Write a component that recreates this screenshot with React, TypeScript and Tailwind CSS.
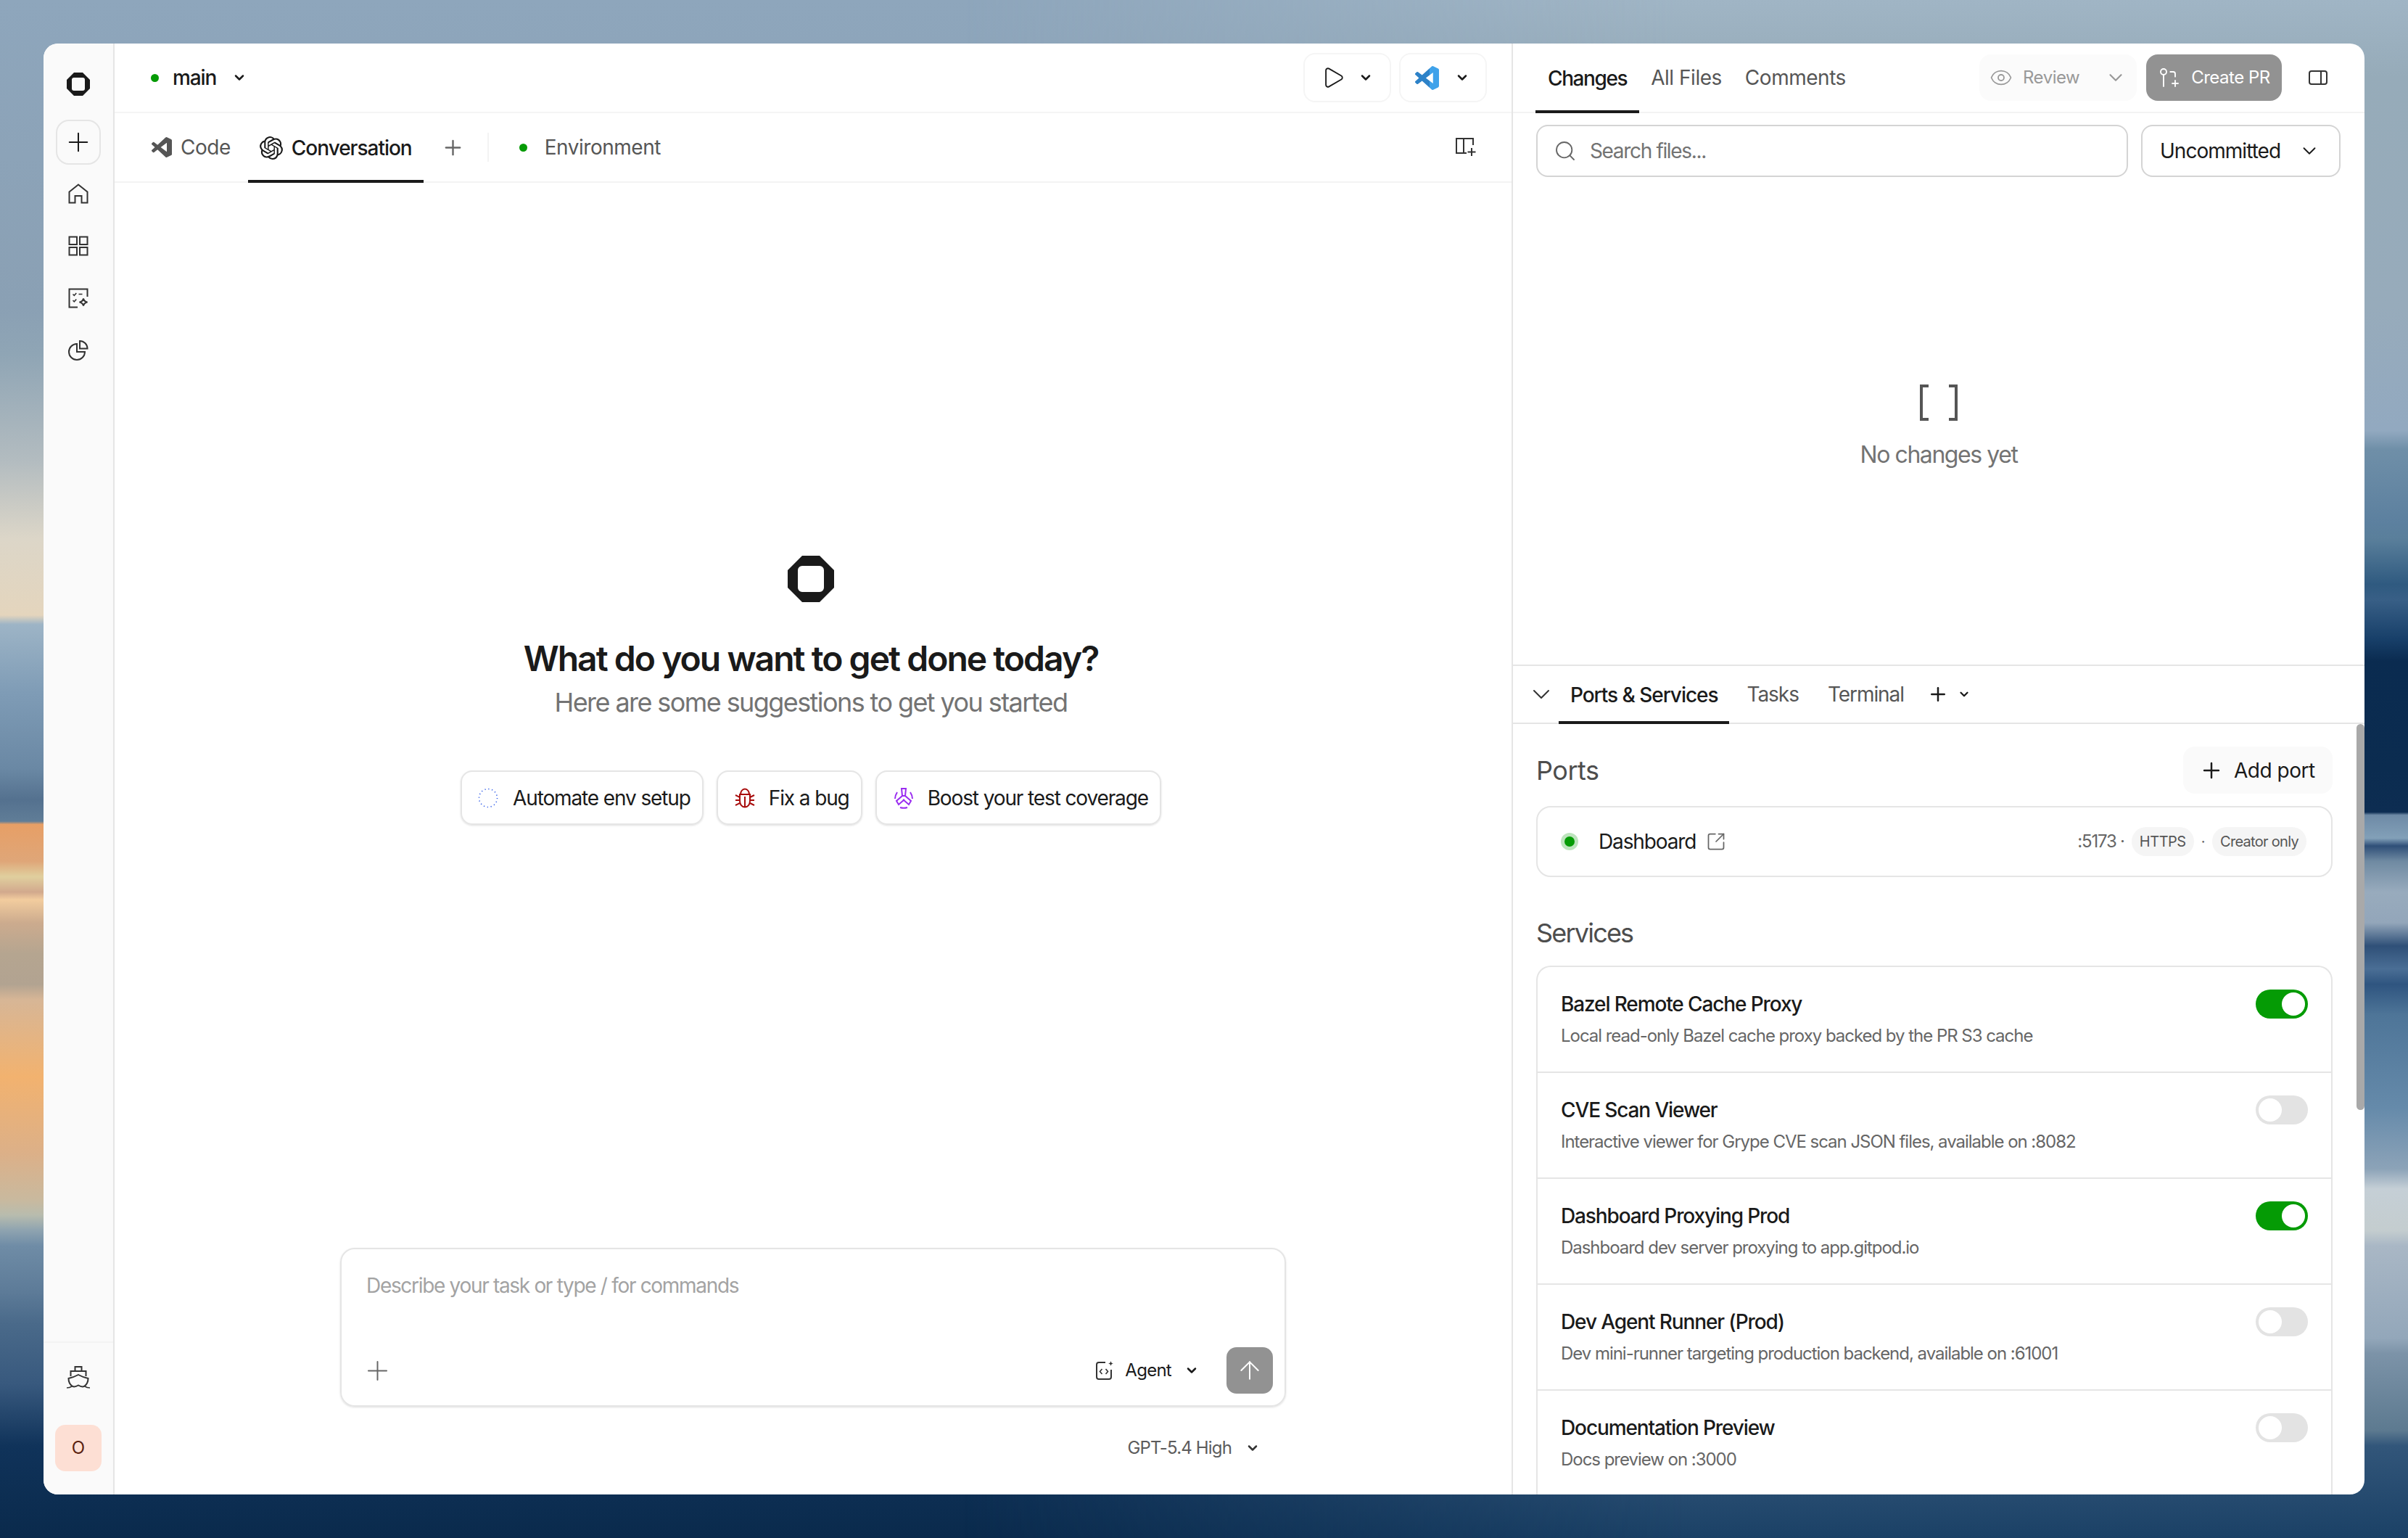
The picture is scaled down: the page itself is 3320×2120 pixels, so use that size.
import * as React from "react";
import {
  ChevronDown,
  Eye,
  GitPullRequestCreate,
  Plus,
  Search,
  SquareArrowOutUpRight,
  ArrowUp,
  Play,
} from "lucide-react";
import { SiOpenai } from "react-icons/si";

const VSCODE_PATH =
  "M23.15 2.587L18.21.21a1.494 1.494 0 0 0-1.705.29l-9.46 8.63-4.12-3.128a.999.999 0 0 0-1.276.057L.327 7.261A1 1 0 0 0 .326 8.74L3.899 12 .326 15.26a1 1 0 0 0 .001 1.479L1.65 17.94a.999.999 0 0 0 1.276.057l4.12-3.128 9.46 8.63a1.492 1.492 0 0 0 1.704.29l4.942-2.377A1.5 1.5 0 0 0 24 20.06V3.939a1.5 1.5 0 0 0-.85-1.352zm-5.146 14.861L10.826 12l7.178-5.448v10.896z";

function Logo(props: { className: string }) {
  return (
    <svg className={props.className} viewBox="0 0 32 32" fill="#1a1a1a">
      <path
        fillRule="evenodd"
        d="M10 0h12l10 10v12L22 32H10L0 22V10zM10 7h12a3 3 0 0 1 3 3v12a3 3 0 0 1-3 3H10a3 3 0 0 1-3-3V10a3 3 0 0 1 3-3z"
      />
    </svg>
  );
}

function SmallChevron(props: { className?: string }) {
  return <ChevronDown className={props.className ?? "size-[20px] text-[#1a1a1a]"} strokeWidth={3} />;
}

function HomeIcon() {
  return (
    <svg className="size-[28px]" viewBox="0 0 28 28" fill="none" stroke="#333" strokeWidth="2">
      <path d="M1.5 11.5L14 1.5l12.5 10v15h-8V17h-9v9.5h-8z" />
    </svg>
  );
}

function GridIcon() {
  return (
    <svg className="size-[28px]" viewBox="0 0 28 28" fill="none" stroke="#333" strokeWidth="2">
      <rect x="1.5" y="1.5" width="10.5" height="10.5" />
      <rect x="16" y="1.5" width="10.5" height="10.5" />
      <rect x="1.5" y="16" width="10.5" height="10.5" />
      <rect x="16" y="16" width="10.5" height="10.5" />
    </svg>
  );
}

function TasksIcon() {
  return (
    <svg className="size-[28px]" viewBox="0 0 28 28" fill="none" stroke="#333" strokeWidth="2">
      <path d="M13 26.5H1.5v-25h25V12" />
      <path d="M6.5 8.5l1.8 1.8 3-3.3M14.5 8.5h5M6.5 17l1.8 1.8 3-3.3" strokeWidth="1.6" />
      <path d="M21 14.5c.6 3 2 4.4 5.5 5-3.500.6-4.900 2-5.500 5-.6-3-2-4.400-5.500-5 3.500-.6 4.900-2 5.500-5z" />
    </svg>
  );
}

function PieIcon() {
  return (
    <svg className="size-[28px]" viewBox="0 0 28 28" fill="none" stroke="#333" strokeWidth="2">
      <path d="M12 5A11 11 0 1 0 23 16H12z" />
      <path d="M16 1a10.500 10.500 0 0 1 10.500 10.500H16z" />
    </svg>
  );
}

function ShipIcon() {
  return (
    <svg className="size-[32px]" viewBox="0 0 32 32" fill="none" stroke="#333" strokeWidth="2">
      <rect x="11.500" y="1" width="9" height="6" />
      <path d="M5.500 14V7h21v7" />
      <path d="M2.500 17c6-1.500 9-2.500 13.500-5 4.500 2.500 7.500 3.500 13.500 5 0 5-2.500 9-5.500 11-2.500 1-5.500 0-8-1.500-2.500 1.500-5.500 2.500-8 1.500-3-2-5.500-6-5.500-11z" />
      <path d="M0 30c3 0 5-.5 7-2M32 30c-3 0-5-.5-7-2" strokeWidth="1.600" />
    </svg>
  );
}

function SplitPlusIcon() {
  return (
    <svg className="size-[30px]" viewBox="0 0 30 30" fill="none" stroke="#333" strokeWidth="2">
      <path d="M25 12V3H2v20h14M12 3v20" />
      <path d="M23 16v11M17.500 21.500h11" />
    </svg>
  );
}

function PanelIcon() {
  return (
    <svg className="size-[28px]" viewBox="0 0 28 28" fill="none" stroke="#333" strokeWidth="2">
      <rect x="2" y="5" width="24" height="18" rx="3" />
      <path d="M18 5v18" />
    </svg>
  );
}

function BoostIcon() {
  return (
    <svg className="size-[30px]" viewBox="0 0 30 30" fill="none" stroke="#9a2cf0" strokeWidth="2">
      <path d="M12 2h6l-1 10h-4zM13 12l-8 7 3 5 8-7M17 12l8 7-3 5-8-7" />
      <path d="M6 7c-2 3-3 6-3 9M24 7c2 3 3 6 3 9M10 28c3 1 7 1 10 0" />
    </svg>
  );
}

function AgentIcon() {
  return (
    <svg className="size-[28px]" viewBox="0 0 28 28" fill="none" stroke="#333" strokeWidth="2">
      <path d="M15 3H6a3 3 0 0 0-3 3v17a3 3 0 0 0 3 3h14a3 3 0 0 0 3-3V13" />
      <path d="M10.500 12l-3 3.500 3 3.500M15.500 12l3 3.500-3 3.500" strokeWidth="1.600" />
      <path d="M22.500 1c.4 2.400 1.200 3.200 3.500 3.500-2.300.4-3.100 1.200-3.500 3.500-.4-2.300-1.200-3.100-3.500-3.500 2.300-.3 3.100-1.100 3.500-3.500z" fill="#333" stroke="none" />
    </svg>
  );
}

function Toggle(props: { on?: boolean }) {
  return (
    <div
      className={
        props.on
          ? "flex h-[40px] w-[72px] shrink-0 items-center justify-end rounded-full bg-[#059b05] p-[4px]"
          : "flex h-[40px] w-[72px] shrink-0 items-center justify-start rounded-full bg-[#e3e3e3] p-[4px]"
      }
    >
      <div className="size-[32px] rounded-full bg-white" />
    </div>
  );
}

const services = [
  { name: "Bazel Remote Cache Proxy", desc: "Local read-only Bazel cache proxy backed by the PR S3 cache", on: true },
  { name: "CVE Scan Viewer", desc: "Interactive viewer for Grype CVE scan JSON files, available on :8082", on: false },
  { name: "Dashboard Proxying Prod", desc: "Dashboard dev server proxying to app.gitpod.io", on: true },
  { name: "Dev Agent Runner (Prod)", desc: "Dev mini-runner targeting production backend, available on :61001", on: false },
  { name: "Documentation Preview", desc: "Docs preview on :3000", on: false },
];

function Sidebar() {
  return (
    <aside className="flex w-[98px] shrink-0 flex-col items-center border-r-2 border-[#e5e5e5] bg-[#fafafa]">
      <Logo className="mt-[40px] size-[32px]" />
      <button className="mt-[33px] flex size-[62px] items-center justify-center rounded-[18px] border-2 border-[#e5e5e5]">
        <Plus className="size-[42px] text-[#1a1a1a]" strokeWidth={1.15} />
      </button>
      <div className="mt-[26px] flex flex-col items-center gap-[44px]">
        <HomeIcon />
        <GridIcon />
        <TasksIcon />
        <PieIcon />
      </div>
      <div className="mt-auto flex w-full flex-col items-center border-t-2 border-[#f3f3f3] pt-[32px] pb-[32px]">
        <ShipIcon />
        <div className="mt-[49px] flex size-[64px] items-center justify-center rounded-[14px] bg-[#fddfd4] text-[24px] tracking-normal text-[#5a1f10]">
          O
        </div>
      </div>
    </aside>
  );
}

function LeftPanel() {
  return (
    <section className="flex min-w-0 flex-1 flex-col border-r-2 border-[#e5e5e5]">
      <div className="flex h-[96px] shrink-0 items-center justify-between border-b-2 border-[#f5f5f5] pr-[34px] pl-[50px]">
        <div className="flex items-center">
          <span className="size-[11px] rounded-full bg-[#059b05]" />
          <span className="ml-[19px] text-[28px] font-medium tracking-[-0.04em] text-[#1a1a1a]">main</span>
          <SmallChevron className="ml-[22px] size-[20px] text-[#1a1a1a]" />
        </div>
        <div className="flex items-center gap-[11px]">
          <button className="flex h-[68px] w-[121px] items-center justify-center gap-[18px] rounded-[16px] border-2 border-[#f5f5f5] pr-[2px]">
            <Play className="size-[34px] text-[#1a1a1a]" strokeWidth={1.3} />
            <SmallChevron />
          </button>
          <button className="flex h-[68px] w-[121px] items-center justify-center gap-[22px] rounded-[16px] border-2 border-[#f5f5f5] pr-[2px]">
            <svg className="size-[33px]" viewBox="0 0 24 24">
              <defs>
                <linearGradient id="vscode-tone" x1="0" y1="0" x2="1" y2="0">
                  <stop offset="0.62" stopColor="#2d82c8" />
                  <stop offset="0.62" stopColor="#3fa2ea" />
                </linearGradient>
              </defs>
              <path d={VSCODE_PATH} fill="url(#vscode-tone)" />
            </svg>
            <SmallChevron />
          </button>
        </div>
      </div>

      <div className="flex h-[96px] shrink-0 items-center justify-between border-b-2 border-[#f3f3f3] pr-[48px] pl-[35px]">
        <div className="flex h-full items-center gap-[8px]">
          <div className="flex h-full items-center gap-[12px] px-[16px] text-[28px] text-[#565656]">
            <svg className="size-[28px]" viewBox="0 0 24 24" fill="#555">
              <path d={VSCODE_PATH} />
            </svg>
            Code
          </div>
          <div className="mb-[-2px] flex h-[calc(100%+2px)] items-center gap-[12px] border-b-4 border-[#1a1a1a] px-[16px] pt-[4px] text-[28px] font-medium tracking-[-0.036em] text-[#1a1a1a]">
            <SiOpenai className="size-[32px]" />
            Conversation
          </div>
          <Plus className="ml-[16px] size-[33px] text-[#666]" strokeWidth={1.75} />
          <div className="ml-[23px] h-[40px] w-[2px] bg-[#f3f3f3]" />
          <span className="ml-[34px] size-[11px] rounded-full bg-[#059b05]" />
          <span className="ml-[16px] text-[28px] text-[#565656]">Environment</span>
        </div>
        <SplitPlusIcon />
      </div>

      <div className="flex min-h-0 flex-1 flex-col items-center">
        <div className="flex flex-col items-center pr-[6px]">
          <Logo className="mt-[514px] size-[64px]" />
          <h1 className="mt-[48px] text-[48px] leading-[60px] font-semibold tracking-[-0.041em] text-[#1a1a1a]">
            What do you want to get done today?
          </h1>
          <p className="mt-[6px] text-[36px] leading-[48px] tracking-[-0.044em] text-[#737373]">
            Here are some suggestions to get you started
          </p>
          <div className="mt-[70px] flex gap-[18px] text-[28px] tracking-[-0.04em] text-[#1a1a1a]">
            <button className="flex h-[75px] items-center gap-[20px] rounded-[16px] border-2 border-[#e5e5e5] pr-[16px] pl-[22px] shadow-sm">
              <svg className="size-[28px]" viewBox="0 0 28 28" fill="none" stroke="#2f5be8" strokeWidth="1.600" strokeDasharray="1.200 3.700">
                <circle cx="14" cy="14" r="12.500" />
              </svg>
              Automate env setup
            </button>
            <button className="flex h-[75px] items-center gap-[18px] rounded-[16px] border-2 border-[#e5e5e5] pr-[16px] pl-[22px] shadow-sm">
              <svg className="size-[30px]" viewBox="0 0 30 30" fill="none" stroke="#a80d0d" strokeWidth="2">
                <path d="M9 10c0-4 2.500-7.500 6-7.500s6 3.500 6 7.500zM8 10h14v9c0 5-3 8.500-7 8.500S8 24 8 19zM15 13v14" />
                <path d="M2 11l6 3M28 11l-6 3M2 18h6M28 18h-6M2 25l6-3M28 25l-6-3" />
              </svg>
              Fix a bug
            </button>
            <button className="flex h-[75px] items-center gap-[18px] rounded-[16px] border-2 border-[#e5e5e5] pr-[16px] pl-[22px] shadow-sm">
              <BoostIcon />
              Boost your test coverage
            </button>
          </div>
        </div>

        <div className="mt-auto flex h-[219px] w-[1304px] flex-col justify-between rounded-[20px] border-2 border-[#e5e5e5] pt-[30px] pr-[16px] pb-[16px] pl-[34px] shadow-sm">
          <div className="text-[28px] leading-[40px] tracking-[-0.047em] text-[#a3a3a3]">Describe your task or type / for commands</div>
          <div className="flex items-center">
            <Plus className="mr-auto ml-[-6px] size-[43px] text-[#666]" strokeWidth={1.1} />
            <AgentIcon />
            <span className="ml-[14px] text-[24px] tracking-[-0.03em] text-[#1a1a1a]">Agent</span>
            <SmallChevron className="mr-[38px] ml-[18px] size-[20px] text-[#1a1a1a]" />
            <button className="flex size-[64px] items-center justify-center rounded-[14px] bg-[#929292]">
              <ArrowUp className="size-[40px] text-white" strokeWidth={1.2} />
            </button>
          </div>
        </div>
        <div className="flex h-[121px] w-[1304px] shrink-0 items-center justify-end pr-[36px] pb-[8px] text-[24px] tracking-[-0.035em] text-[#5c5c5c]">
          GPT-5.4 High
          <SmallChevron className="ml-[19px] size-[20px] text-[#333]" />
        </div>
      </div>
    </section>
  );
}

function RightPanel() {
  return (
    <section className="flex w-[1174px] shrink-0 flex-col">
      <div className="flex h-[96px] shrink-0 items-center border-b-2 border-[#f3f3f3] pr-[50px] pl-[31px]">
        <div className="flex h-full items-center text-[28px] text-[#565656]">
          <div className="mb-[-2px] flex h-[calc(100%+2px)] items-center border-b-4 border-[#1a1a1a] px-[17px] pt-[4px] font-medium tracking-[-0.05em] text-[#1a1a1a]">
            Changes
          </div>
          <div className="px-[16px]">All Files</div>
          <div className="px-[16px]">Comments</div>
        </div>
        <button className="ml-auto flex h-[64px] w-[217px] items-center rounded-[16px] bg-[#fbfbfb] pr-[14px] pl-[14px] text-[24px] text-[#999]">
          <Eye className="size-[32px]" strokeWidth={1.33} />
          <span className="ml-[14px]">Review</span>
          <ChevronDown className="ml-auto size-[30px]" strokeWidth={1.75} />
        </button>
        <button className="ml-[13px] flex h-[64px] w-[187px] items-center justify-center gap-[14px] rounded-[16px] bg-[#929292] text-[24px] text-white">
          <GitPullRequestCreate className="size-[32px]" strokeWidth={1.4} />
          Create PR
        </button>
        <div className="ml-[36px]">
          <PanelIcon />
        </div>
      </div>

      <div className="flex h-[762px] shrink-0 flex-col border-b-2 border-[#e5e5e5]">
        <div className="mt-[16px] flex shrink-0 gap-[18px] pr-[33px] pl-[32px]">
          <div className="flex h-[72px] flex-1 items-center rounded-[16px] border-2 border-[#d4d4d4] pl-[22px] text-[28px] tracking-[-0.048em] text-[#737373]">
            <Search className="size-[32px] text-[#666]" strokeWidth={1.4} />
            <span className="ml-[18px]">Search files...</span>
          </div>
          <div className="flex h-[72px] w-[275px] items-center rounded-[16px] border-2 border-[#d4d4d4] pr-[26px] pl-[24px] text-[28px] tracking-[-0.035em] text-[#1a1a1a]">
            Uncommitted
            <ChevronDown className="ml-auto size-[30px]" strokeWidth={1.5} />
          </div>
        </div>
        <div className="flex flex-col items-center pt-[286px]">
          <svg className="h-[50px] w-[52px]" viewBox="0 0 52 50" fill="none" stroke="#555" strokeWidth="4">
            <path d="M12 2H2v46h10M40 2h10v46H40" />
          </svg>
          <div className="mt-[27px] text-[32px] leading-[40px] tracking-[-0.045em] text-[#737373]">No changes yet</div>
        </div>
      </div>

      <div className="relative flex min-h-0 flex-1 flex-col overflow-hidden">
        <div className="flex h-[80px] shrink-0 items-center border-b-2 border-[#e5e5e5] pl-[19px] text-[28px] tracking-[-0.0375em] text-[#565656]">
          <ChevronDown className="size-[40px] text-[#333]" strokeWidth={1.2} />
          <div className="mb-[-2px] ml-[4px] flex h-[calc(100%+2px)] items-center border-b-4 border-[#1a1a1a] px-[16px] pt-[4px] font-medium text-[#1a1a1a]">
            Ports &amp; Services
          </div>
          <div className="ml-[8px] px-[16px]">Tasks</div>
          <div className="ml-[8px] px-[16px]">Terminal</div>
          <Plus className="ml-[16px] size-[30px] text-[#1a1a1a]" strokeWidth={2} />
          <SmallChevron className="ml-[12px] size-[18px] text-[#1a1a1a]" />
        </div>

        <div className="min-h-0 flex-1 pr-[44px] pl-[32px]">
          <div className="mt-[31px] flex items-center justify-between">
            <h2 className="text-[36px] leading-[48px] text-[#4d4d4d]">Ports</h2>
            <button className="flex h-[65px] w-[206px] items-center gap-[14px] rounded-[16px] bg-[#fafafa] pl-[22px] text-[28px] text-[#1a1a1a]">
              <Plus className="size-[34px]" strokeWidth={1.75} />
              Add port
            </button>
          </div>

          <div className="mt-[17px] flex h-[98px] items-center rounded-[20px] border-2 border-[#e5e5e5] pr-[34px] pl-[32px]">
            <span className="flex size-[24px] items-center justify-center rounded-full bg-[#bde4bd]">
              <span className="size-[14px] rounded-full bg-[#059b05]" />
            </span>
            <span className="ml-[28px] text-[28px] tracking-[-0.04em] text-[#1a1a1a]">Dashboard</span>
            <SquareArrowOutUpRight className="ml-[14px] size-[28px] text-[#666]" strokeWidth={1.5} />
            <span className="ml-auto text-[24px] tracking-[-0.05em] text-[#666]">:5173 ·</span>
            <span className="ml-[10px] flex h-[40px] items-center rounded-full bg-[#f5f5f5] px-[11px] text-[20px] text-[#565656]">HTTPS</span>
            <span className="mx-[10px] text-[20px] text-[#666]">·</span>
            <span className="flex h-[40px] items-center rounded-full bg-[#f5f5f5] px-[11px] text-[20px] tracking-[-0.035em] text-[#565656]">Creator only</span>
          </div>

          <h2 className="mt-[53px] text-[36px] leading-[48px] tracking-[-0.05em] text-[#4d4d4d]">Services</h2>

          <div className="mt-[21px] rounded-t-[20px] border-x-2 border-t-2 border-[#e5e5e5]">
            {services.map((service) => (
              <div key={service.name} className="flex h-[146px] items-start justify-between border-b-2 border-[#e5e5e5] pt-[31px] pr-[32px] pl-[32px]">
                <div>
                  <div className="text-[28px] leading-[40px] font-medium tracking-[-0.04em] text-[#1a1a1a]">{service.name}</div>
                  <div className="mt-[8px] text-[24px] leading-[32px] tracking-[-0.043em] text-[#666]">{service.desc}</div>
                </div>
                <Toggle on={service.on} />
              </div>
            ))}
          </div>
        </div>

        <div className="absolute top-[80px] right-0 h-[532px] w-[11px] rounded-full bg-[#a9a9a9]" />
      </div>
    </section>
  );
}

export default function App() {
  return (
    <div className="relative h-screen w-full overflow-hidden bg-[linear-gradient(to_bottom,#8ea6bc_0%,#8aa0b4_20%,#8fa5b5_23%,#b3bcc0_30%,#dcd6c8_35%,#e4d5bd_40%,#9db4c6_40.6%,#7f9cb6_45%,#6a88a4_50%,#54718f_52%,#607d97_53.4%,#e79f66_53.6%,#dfa678_56%,#e0cf9e_57%,#d2a98d_58%,#f2cc9e_58.5%,#ccab8e_60%,#b5a590_62%,#b2a391_64%,#d7b696_65%,#f2b26f_70%,#dcb088_75%,#c9b99e_78%,#b8bcae_79%,#8ea3b0_80%,#6f8ca6_81%,#5d7b98_84%,#4a6a8a_86%,#38597e_90%,#10335a_94%,#0a2a4c_100%)] p-[60px] font-['Inter',sans-serif] tracking-[-0.03em]">
      <div className="absolute inset-0 bg-[linear-gradient(to_bottom,#a0b5c5_0%,#96abb9_5%,#97abbb_20%,#92a9c0_28%,#6f8fa8_29.2%,#5c809f_34%,#5a7f9b_35%,#2f5a80_38%,#385f86_39%,#18406a_41.5%,#0a2b50_43%,#0b2c50_50%,#0d2d52_52.8%,#6e8aa6_53%,#82a0b8_54.5%,#2f4f78_55%,#6f8aa2_56%,#98abbd_58%,#93a6ba_60%,#2f5078_61.5%,#4a6e95_63%,#2f5580_64%,#4e7598_66%,#658aaa_72%,#8ca3b8_76%,#c5cfd6_77.3%,#c4cdcf_80%,#a9b7c5_81%,#93a7ba_87%,#7c93a8_88%,#5d7a90_93%,#32567a_94%,#1b4166_100%)] [mask-image:linear-gradient(to_right,transparent_40%,black_70%)]" />
      <div className="relative flex h-full overflow-hidden rounded-[20px] bg-white">
        <Sidebar />
        <LeftPanel />
        <RightPanel />
      </div>
    </div>
  );
}
